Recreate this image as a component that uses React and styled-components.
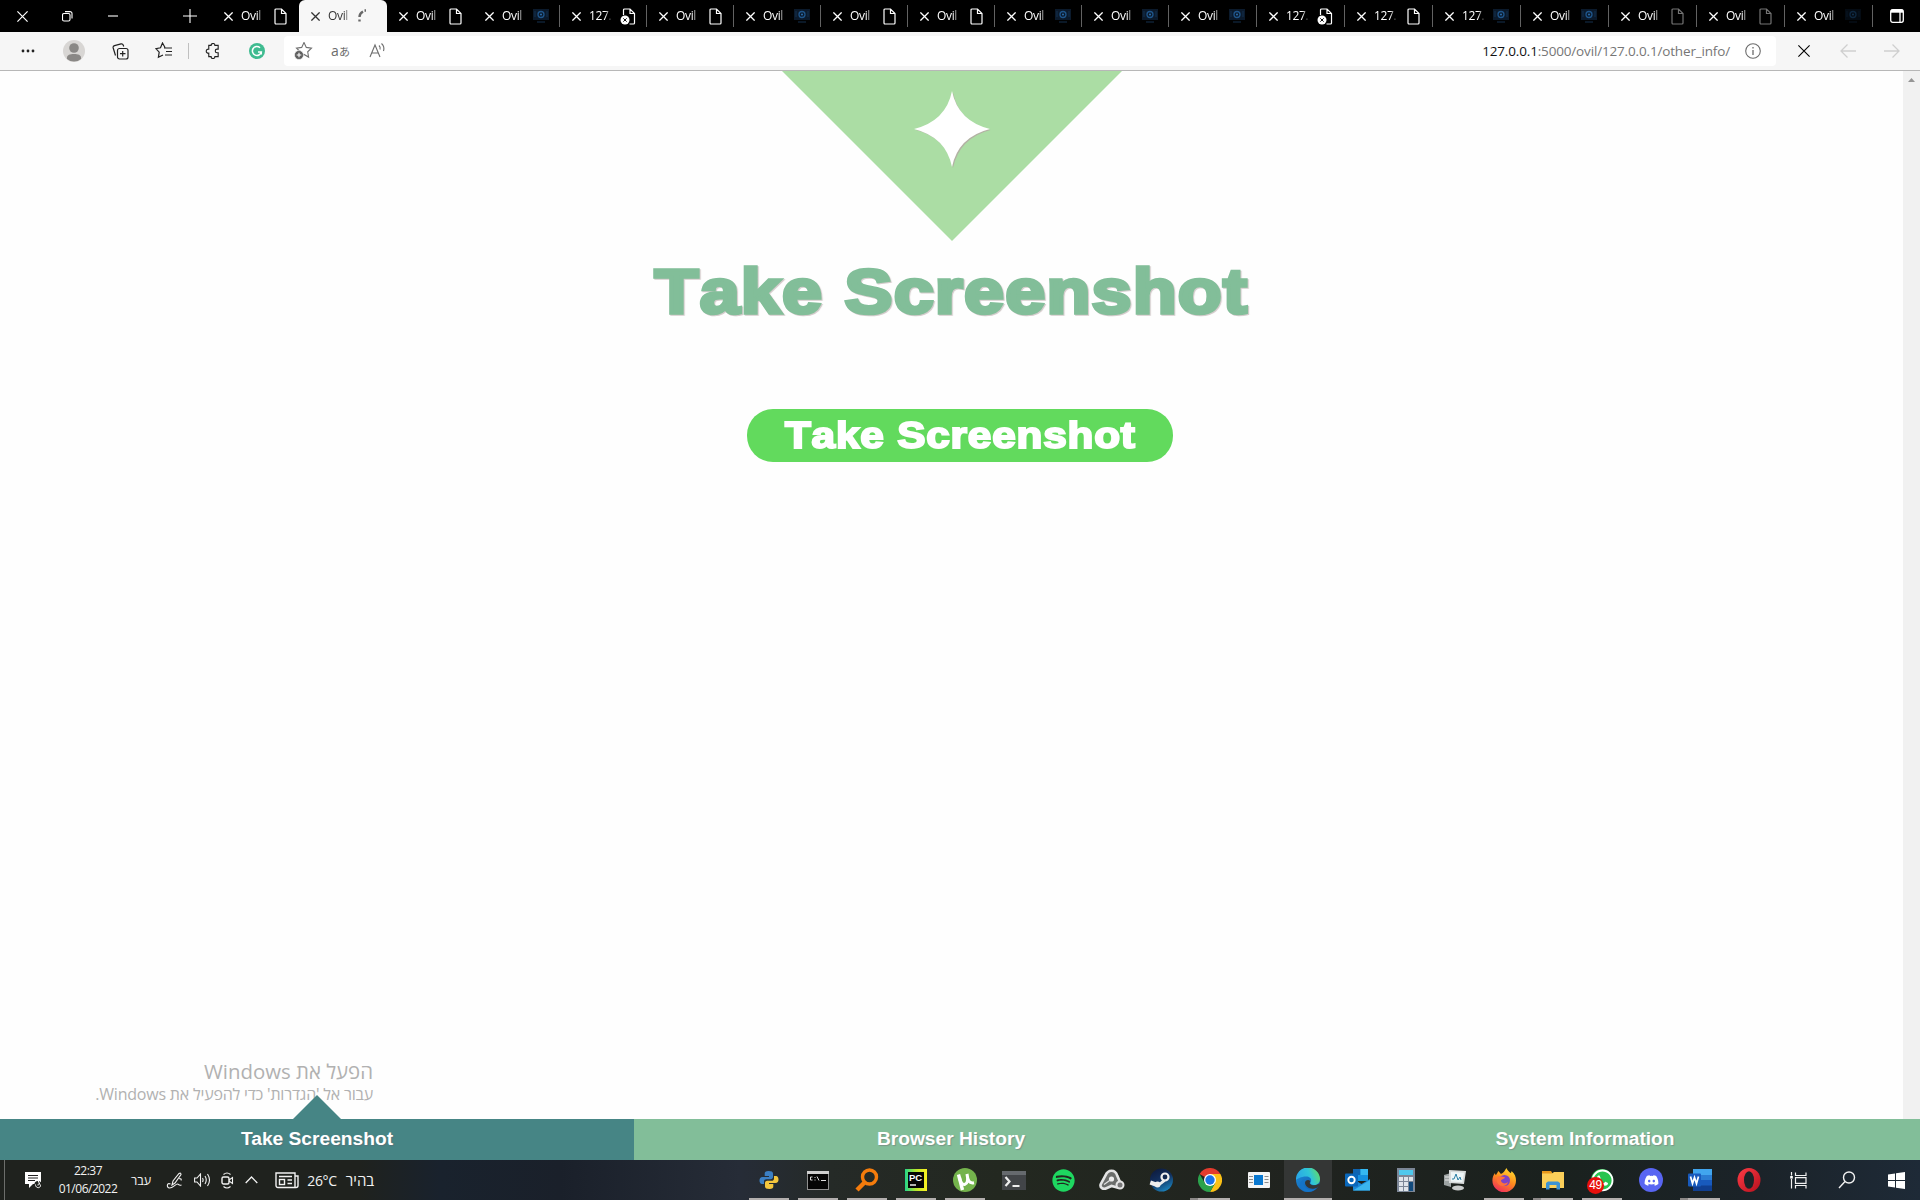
import React from "react";
import styled, { createGlobalStyle, css } from "styled-components";
import { FaSpotify, FaDiscord, FaWhatsapp } from "react-icons/fa";

const UI = `"Open Sans", "Noto Sans", "DejaVu Sans", sans-serif`;
const ARIAL = `"Liberation Sans", Arial, sans-serif`;

const Global = createGlobalStyle`
  *, *::before, *::after { box-sizing: border-box; }
  body { margin: 0; background: #fff; overflow: hidden; }
  svg { display: block; flex: none; }
`;

const Screen = styled.div`
  display: flex;
  flex-direction: column;
  width: 1920px;
  height: 1200px;
  overflow: hidden;
  font-family: ${UI};
  background: #fefefe;
`;

/* ---------- tab strip ---------- */
const TabStrip = styled.div`
  display: flex;
  height: 32px;
  background: #000;
  color: #fff;
`;
const WindowButtons = styled.div`
  display: flex;
  width: 212px;
  align-items: center;
`;
const WindowButton = styled.div`
  display: flex;
  justify-content: center;
  width: ${(p) => p.$w || 46}px;
  margin-left: ${(p) => p.$gap || 0}px;
`;
const Tab = styled.div`
  display: flex;
  align-items: center;
  width: ${(p) => p.$w}px;
  height: 32px;
  padding-left: 12px;
  border-right: 1px solid ${(p) => (p.$line ? "#626262" : "transparent")};
  border-image: ${(p) => (p.$line ? "linear-gradient(#000 6px, #626262 6px, #626262 26px, #000 26px) 1" : "none")};
  ${(p) =>
    p.$active &&
    css`
      background: #f7f7f7;
      color: #333;
      border-radius: 6px 6px 0 0;
    `}
`;
const TabTitle = styled.span`
  width: 23px;
  margin-left: 8px;
  overflow: hidden;
  white-space: nowrap;
  font-size: 12px;
  line-height: 18px;
  letter-spacing: -0.35px;
  mask-image: linear-gradient(90deg, #000 16px, transparent 23px);
`;
const TabIcon = styled.span`
  display: flex;
  justify-content: center;
  width: 18px;
  margin-left: ${(p) => (p.$near ? 2 : 7)}px;
  opacity: ${(p) => (p.$dim ? 0.45 : 1)};
`;
const StripEnd = styled.div`
  display: flex;
  flex: 1;
  align-items: center;
  justify-content: center;
`;

/* ---------- toolbar ---------- */
const Toolbar = styled.div`
  display: flex;
  align-items: center;
  height: 39px;
  background: #f6f6f6;
  border-bottom: 1px solid #b7b7b7;
`;
const ToolSlot = styled.div`
  display: flex;
  justify-content: center;
  width: ${(p) => p.$w}px;
`;
const Divider = styled.div`
  width: 1px;
  height: 16px;
  background: #c0c0c0;
`;
const AddressBar = styled.div`
  display: flex;
  align-items: center;
  width: 1492px;
  height: 30px;
  background: #fff;
  border-radius: 4px;
`;
const Translate = styled.span`
  display: flex;
  align-items: baseline;
  gap: 0;
  color: #6c6c6c;
  font-size: 14px;
  line-height: 20px;
  white-space: nowrap;
  small { font: 11px/14px "Noto Sans CJK JP", sans-serif; }
`;
const Url = styled.div`
  flex: 1;
  text-align: right;
  font-size: 13.5px;
  letter-spacing: -0.16px;
  line-height: 20px;
  color: #767676;
  b { font-weight: 400; color: #111; }
`;

/* ---------- web page ---------- */
const PageRow = styled.div`
  display: flex;
  height: 1048px;
`;
const Page = styled.main`
  display: flex;
  flex-direction: column;
  align-items: center;
  width: 1903px;
  font-family: ${ARIAL};
`;
const ScrollBar = styled.div`
  display: flex;
  justify-content: center;
  width: 17px;
  padding-top: 7px;
  background: #f1f1f1;
`;
const Heading = styled.h1`
  margin: 14px 0 0;
  font-size: 63px;
  line-height: 72px;
  font-kerning: none;
  letter-spacing: 1.1px;
  color: #82be99;
  -webkit-text-stroke: 3.6px #82be99;
  filter: drop-shadow(1px 1px 0.5px rgba(150, 130, 130, 0.4));
  transform: scaleX(1.14);
`;
const ShotButton = styled.button`
  display: flex;
  align-items: center;
  justify-content: center;
  width: 426px;
  height: 53px;
  margin: 82px 0 0 17px;
  padding: 0;
  border: 0;
  border-radius: 26px;
  background: #62da5d;
`;
const ShotLabel = styled.span`
  padding-top: 1px;
  font: bold 37px/50px ${ARIAL};
  font-kerning: none;
  letter-spacing: 0.7px;
  color: #fff;
  -webkit-text-stroke: 2px #fff;
  transform: scaleX(1.144);
`;
const Watermark = styled.div`
  position: absolute;
  left: 60px;
  top: 1058px;
  width: 313px;
  direction: rtl;
  color: #b1b1b1;
  white-space: nowrap;
`;
const MarkTitle = styled.div`
  font-size: 20.400px;
  line-height: 27px;
`;
const MarkText = styled.div`
  font-size: 16px;
  line-height: 19px;
  letter-spacing: -0.2px;
`;

const Nav = styled.nav`
  display: flex;
  position: relative;
  height: 41px;
  padding-right: 18px;
  background: #82be99;
`;
const NavItem = styled.div`
  position: relative;
  flex: 1;
  text-align: center;
  font: bold 19.2px/39px ${ARIAL};
  color: #fff;
  text-shadow: 1px 1px 1px rgba(110, 90, 110, 0.4);
  background: ${(p) => (p.$active ? "#468585" : "#82be99")};
  &::before {
    content: "";
    display: ${(p) => (p.$active ? "block" : "none")};
    position: absolute;
    left: 293px;
    bottom: 41px;
    border: 24px solid transparent;
    border-top: 0;
    border-bottom-color: #468585;
  }
`;

/* ---------- taskbar ---------- */
const Taskbar = styled.footer`
  display: flex;
  height: 40px;
  color: #f2f2f2;
  background: linear-gradient(90deg, #1f221e 0, #1f221e 360px, #19222d 440px, #1a202a 560px, #262c37 740px, #252a27 830px, #232820 1000px, #20231f 1300px, #1a211e 1560px, #1b2329 1760px, #1e2a37 1920px);
`;
const Tray = styled.div`
  display: flex;
  align-items: center;
  width: 745px;
`;
const TrayEdge = styled.div`
  width: 1px;
  height: 40px;
  margin-left: 4px;
  background: #6c6e6b;
`;
const TraySlot = styled.div`
  display: flex;
  justify-content: center;
  width: ${(p) => p.$w}px;
  margin-left: ${(p) => p.$gap || 0}px;
  font-size: ${(p) => p.$size || 12}px;
  letter-spacing: ${(p) => p.$ls || 0}px;
  white-space: nowrap;
`;
const Clock = styled.div`
  width: 60px;
  margin-left: 16px;
  text-align: center;
  font-size: 12px;
  line-height: 18px;
  letter-spacing: -0.5px;
  white-space: nowrap;
`;
const Apps = styled.div`
  display: flex;
  gap: 1px;
`;
const AppSlot = styled.div`
  display: flex;
  position: relative;
  align-items: center;
  justify-content: center;
  width: 48px;
  height: 40px;
  background: ${(p) => (p.$active ? "#343635" : "transparent")};
`;
const Running = styled.i`
  position: absolute;
  left: ${(p) => (p.$full ? 0 : 4)}px;
  right: ${(p) => (p.$full ? 0 : 4)}px;
  bottom: 0;
  height: 2px;
  background: ${(p) => (p.$stack ? "linear-gradient(90deg,#8c8988 8px,#b3afae 8px)" : "#b3afae")};
`;
const Badge = styled.span`
  position: absolute;
  left: 9px;
  top: 17px;
  width: 17px;
  height: 17px;
  border-radius: 50%;
  background: #e8100c;
  font: 12px/17px ${ARIAL};
  letter-spacing: -0.5px;
  text-align: center;
  color: #fff;
`;
const Disc = styled.span`
  display: flex;
  align-items: center;
  justify-content: center;
  width: ${(p) => p.$s || 24}px;
  height: ${(p) => p.$s || 24}px;
  border-radius: 50%;
  background: ${(p) => p.$bg};
  color: ${(p) => p.$fg};
`;

/* ---------- drawings ---------- */
const Line = ({ w = 16, h = w, box, c = "currentColor", sw = 1.1, children }) => (
  <svg width={w} height={h} viewBox={box || `0 0 ${w} ${h}`} fill="none" stroke={c} strokeWidth={sw}>{children}</svg>
);
const Cross = ({ s = 9, sw = 1.3 }) => <Line w={s} sw={sw}><path d={`M.4 .4L${s - 0.4} ${s - 0.4}M${s - 0.4} .4L.4 ${s - 0.4}`} /></Line>;
const Doc = () => <Line w={13} h={17} sw={1.2}><path d="M1.500 1h6L12 5.500v9.500a1 1 0 0 1-1 1h-9a1 1 0 0 1-1-1v-13a1 1 0 0 1 1-1zM7.500 1v4.500H12" /></Line>;
const BrokenDoc = () => (
  <Line w={16} h={17} sw={1.2}>
    <path d="M3.500 7V2a1 1 0 0 1 1-1h5.500L14.500 5.500v9.500a1 1 0 0 1-1 1h-4M10 1v4.500h4.500" />
    <circle cx="5" cy="12" r="4.500" fill="#fff" stroke="none" />
    <path d="M3.300 10.300l3.400 3.400M6.700 10.300l-3.400 3.400" stroke="#111" strokeWidth="1" />
  </Line>
);
const Blue = () => (
  <svg width="16" height="16" viewBox="0 0 16 16">
    <rect x="0" y="1" width="16" height="11" fill="#0b1a2c" />
    <circle cx="8" cy="6.500" r="3" fill="none" stroke="#1f558a" strokeWidth="1.300" />
    <circle cx="8" cy="6.500" r="1" fill="#2c6fae" />
    <path d="M2 3v6M14 3v6M4 14h8" stroke="#15304e" />
  </svg>
);
const Spinner = () => <Line w={10} h={14} c="#686868" sw={2.400}><path d="M6 2.500Q2.500 4.500 2.500 8M2.500 10.500v2M7.500 1.500h1.500" /></Line>;
const tabIcons = { doc: Doc, bad: BrokenDoc, blue: Blue, spin: Spinner };

const Puzzle = () => <Line w={16} sw={1.2} c="#222" box="0 0 17 17"><path d="M4 2.500h2.500a2 2 0 0 1 4 0H14v4h-1.200a1.900 1.900 0 0 0 0 3.800H14v4.200h-3.500a2 2 0 0 1-4 0H4v-3.700a2.200 2.200 0 1 1 0-4.300z" /></Line>;
const STAR = "M9 1.500l2.300 4.900 5.200.7-3.800 3.700.9 5.300L9 13.500l-4.600 2.600.9-5.300L1.500 7.100l5.200-.7z";

const Python = () => (
  <svg width="20" height="20" viewBox="0 0 20 20">
    <path d="M9.500 1c-3 0-3.800 1-3.800 2.500V6H10v1H3.500C1.500 7 .5 8.500.5 10.500S1.500 14 3 14h2v-2.500C5 10 6 9.200 7.500 9.200h4.300c1.400 0 2.200-1 2.200-2.200V3.500C14 1.800 12.500 1 9.500 1z" fill="#3b7fc4" />
    <path d="M10.500 19c3 0 3.800-1 3.800-2.500V14H10v-1h6.500c2 0 3-1.500 3-3.500S18.500 6 17 6h-2v2.500c0 1.500-1 2.300-2.500 2.300H8.200C6.800 10.800 6 11.800 6 13v3.500c0 1.700 1.500 2.500 4.500 2.500z" fill="#f4c63d" />
  </svg>
);
const Cmd = () => (
  <svg width="22" height="19" viewBox="0 0 22 19">
    <rect width="22" height="19" fill="#8f8f8f" /><rect width="22" height="3" fill="#cfcfcf" /><rect x="1" y="3" width="20" height="15" fill="#050505" />
    <path d="M5.500 6H3.500v3h2M8 6v1M8 8.500v1M10 5.500l2 4M14 9.500h5" stroke="#ddd" fill="none" />
  </svg>
);
const Everything = () => <Line w={24} c="#f57c0c" sw={3.400}><circle cx="14.500" cy="9" r="7" /><path d="M9.500 14.500L2 22" strokeWidth="4.500" /></Line>;
const PyCharm = () => (
  <svg width="22" height="22" viewBox="0 0 22 22">
    <defs><linearGradient id="pc" x1="0" x2="1"><stop offset="0" stopColor="#22d58b" /><stop offset=".5" stopColor="#b7e62c" /><stop offset="1" stopColor="#fcf221" /></linearGradient></defs>
    <rect width="22" height="22" fill="url(#pc)" /><rect x="3" y="3" width="16" height="16" fill="#050505" />
    <text x="4" y="12" fontFamily="Liberation Sans, sans-serif" fontWeight="bold" fontSize="9.500" textLength="13" fill="#fff">PC</text><path d="M5 16h6" stroke="#fff" strokeWidth="1.400" />
  </svg>
);
const UTorrent = () => (
  <svg width="24" height="24" viewBox="0 0 24 24"><circle cx="12" cy="12" r="12" fill="#74b34c" />
    <path d="M5.500 6.500l4 15.500" fill="none" stroke="#fff" strokeWidth="3.400" />
    <path d="M6.500 9c1 6 3 8 5.500 7.300s3.300-3.500 2-10.300c.8 6.500 2 9.800 7 8.800" fill="none" stroke="#fff" strokeWidth="3" /></svg>
);
const Terminal = () => (
  <svg width="24" height="19" viewBox="0 0 24 19"><rect width="24" height="19" fill="#424548" /><rect width="24" height="4" fill="#666a6e" />
    <path d="M3.500 6l4 4.500-4 4.500" fill="none" stroke="#eee" strokeWidth="2.200" /><path d="M10.500 15h7" stroke="#eee" strokeWidth="2" /></svg>
);
const Knot = () => (
  <svg width="26" height="22" viewBox="0 0 26 22" fill="none" stroke="#e4e4e4">
    <path d="M12.500 1.800c4 0 5 2.500 5.800 5l3 7c1.200 3.500-1 5.500-4 4.500L12.500 17l-4.500 2c-4 2-7.500-.5-6.200-4L6.500 6.500c1.200-3 2.500-4.700 6-4.700z" fill="#6b6d6b" strokeWidth="2.600" />
    <circle cx="12.500" cy="10" r="2.600" fill="#eee" stroke="none" /><circle cx="21" cy="16" r="3.500" fill="#777" strokeWidth="2" /><path d="M5 15.500L12 10.500" strokeWidth="1.200" />
  </svg>
);
const Steam = () => (
  <svg width="24" height="24" viewBox="0 0 24 24">
    <defs><linearGradient id="st" x1=".2" y1="0" x2=".7" y2="1"><stop offset="0" stopColor="#0d1a3c" /><stop offset=".5" stopColor="#12305f" /><stop offset="1" stopColor="#1c86c0" /></linearGradient></defs>
    <circle cx="12.500" cy="12" r="11.500" fill="url(#st)" />
    <path d="M1.300 14.500l5.500 2" stroke="#eee" strokeWidth="4" /><path d="M8.500 16.500l5.500-5 2.500 2-6 4.500z" fill="#eee" />
    <circle cx="8.500" cy="16.500" r="3" fill="#eee" /><circle cx="16" cy="9" r="3.500" fill="#12284f" stroke="#eee" strokeWidth="2.200" />
  </svg>
);
const Chrome = () => (
  <svg width="24" height="24" viewBox="0 0 24 24">
    <path d="M12 12L1.600 6A12 12 0 0 1 22.400 6z" fill="#e33b2e" /><path d="M12 12V6h10.400A12 12 0 0 1 12 24l5.200-9z" fill="#fbc116" />
    <path d="M12 12l5.200 3L12 24A12 12 0 0 1 1.600 6l5.200 9z" fill="#2ba24c" /><circle cx="12" cy="12" r="6" fill="#fff" /><circle cx="12" cy="12" r="4.700" fill="#1a73e8" />
  </svg>
);
const Reader = () => (
  <svg width="22" height="16" viewBox="0 0 22 16"><rect width="22" height="16" rx="1" fill="#f4f4f4" /><rect x="6" y="3" width="9" height="10" fill="#0a78d0" />
    <path d="M1 4.500h4M1 7.500h4M1 10.500h4M16.500 4.500h4M16.500 7.500h4M16.500 10.500h4" stroke="#8b8b8b" /></svg>
);
const Edge = () => (
  <svg width="24" height="24" viewBox="0 0 24 24">
    <defs>
      <linearGradient id="ea" x1="0" x2="1" y1=".3" y2="0"><stop offset="0" stopColor="#2aa9e6" /><stop offset=".5" stopColor="#2fc5d8" /><stop offset="1" stopColor="#6fdf4e" /></linearGradient>
      <linearGradient id="eb" x1="0" x2="1" y2="1"><stop offset="0" stopColor="#1b8fdc" /><stop offset="1" stopColor="#1255a8" /></linearGradient>
    </defs>
    <circle cx="12" cy="12" r="12" fill="url(#eb)" />
    <path d="M0 12A12 12 0 0 1 24 11c0 4-3 6-6 6-2.500 0-4.500-1-3.500-2.500C16 12 15 8.500 10 8.500 5 8.500 1 11 0 12z" fill="url(#ea)" />
    <path d="M13.800 12.500c1 1.500-.8 2 .2 3.300 2 2 5.500 2 8.500.2l1.500 1-3.500 3c-6 2-11-1-11.500-5 0-2.500 3-4 4.800-2.500z" fill="#343635" />
    <path d="M9 11c-3 4-.5 10 5 10.500 3 .2 5-.5 7.500-2A12 12 0 0 1 8 23.200C2 20 3 12.500 9 11z" fill="#1474c8" />
  </svg>
);
const Outlook = () => (
  <svg width="25" height="22" viewBox="0 0 25 22"><path d="M8 0h15v12H8z" fill="#1490df" /><path d="M8 0h7.500v6H8z" fill="#0f64b0" /><path d="M15.500 0H23v6h-7.500z" fill="#35b8f1" /><path d="M8 10l8.500 5L25 10v11.500H8z" fill="#1a87d6" /><path d="M8 21.500L25 11v10.500z" fill="#3bb5ee" />
    <rect y="4.500" width="13" height="13" rx="1" fill="#0a67ba" /><circle cx="6.500" cy="11" r="3.200" fill="none" stroke="#fff" strokeWidth="1.900" /></svg>
);
const Calculator = () => (
  <svg width="18" height="24" viewBox="0 0 18 24"><rect width="18" height="24" fill="#7c8696" /><rect x="2" y="2" width="14" height="5" fill="#4fc8ec" />
    {[9, 14, 19].map((y) => [2, 7, 12].map((x) => <rect key={x + y * 9} x={x} y={y} width="4" height="4" fill={x === 12 && y > 9 ? "#124a7c" : "#dfe4ea"} />))}<rect x="12" y="14" width="4" height="9" fill="#124a7c" /></svg>
);
const Monitor = () => (
  <svg width="24" height="22" viewBox="0 0 24 22"><path d="M1 6l7-2v14l-7-2z" fill="#9da3a3" /><path d="M2 8h5M2 11h5" stroke="#e8e8e8" /><path d="M6 1l17 1-2 13-15-1z" fill="#d7dada" /><path d="M8 3l13 .7-1.600 9.500L8 12.500z" fill="#eef6f7" /><path d="M9 10h2l2-5 2 6 2-3 1 3" fill="none" stroke="#2a7ea5" /><ellipse cx="15" cy="19" rx="6" ry="2.500" fill="#c9cccc" /></svg>
);
const Firefox = () => (
  <svg width="24" height="24" viewBox="0 0 24 24">
    <defs><linearGradient id="ff" x1=".8" x2=".3" y2="1"><stop offset="0" stopColor="#ffe12f" /><stop offset=".5" stopColor="#ff8a1e" /><stop offset="1" stopColor="#ef2d5d" /></linearGradient></defs>
    <path d="M3 5c0 1 .5 2 1 2 1-2 2-2.500 2-4 1 .5 2 2 3 3 2-1 3-2 5.500-6 .5 2 2 3 4 5 .7-.3 1-1 1-2C23 6 24 9 24 12.500a11.800 11.800 0 0 1-23.600 0C.4 9 1.500 7 3 5z" fill="url(#ff)" />
    <circle cx="12.500" cy="12.500" r="5.500" fill="#7d43c6" /><path d="M5 9c3-1.500 6 0 8 .5-1 2-4 1.500-4 3.500 1 3 5 3 7 1-1 5-9 5.500-11 0z" fill="#ff7139" />
  </svg>
);
const Folder = () => (
  <svg width="23" height="19" viewBox="0 0 23 19"><path d="M0 0h9l2 3H0z" fill="#e8981c" /><path d="M0 2.500h10l2-1.500h10v16H0z" fill="#fbcf59" /><path d="M4 18.500V12l2-1.500h10l2 1.500v6.500h-3.500V14h-7v4.500z" fill="#3c93d4" /></svg>
);
const Word = () => (
  <svg width="24" height="22" viewBox="0 0 24 22"><rect x="5" width="19" height="22" rx="1" fill="#2b7cd3" /><path d="M5 0h19v6H5z" fill="#41a5ee" /><path d="M5 11h19v6H5z" fill="#185abd" /><path d="M5 16.500h19V22H5z" fill="#103f91" /><rect y="4.500" width="13" height="13" rx="1" fill="#185abd" />
    <path d="M2.500 7.500l2 7 2-6 2 6 2-7" fill="none" stroke="#fff" strokeWidth="1.700" /></svg>
);
const Opera = () => (
  <svg width="24" height="24" viewBox="0 0 24 24"><defs><linearGradient id="op" x2="1" y2="1"><stop offset="0" stopColor="#ff3c46" /><stop offset="1" stopColor="#b5101d" /></linearGradient></defs><ellipse cx="12" cy="12" rx="11.500" ry="12" fill="url(#op)" /><ellipse cx="12" cy="12" rx="5" ry="8.800" fill="#1b2328" /></svg>
);
const TaskView = () => <Line w={17} h={17} sw={1.200}><path d="M5.500 .5v3h10.500v-3M5.500 16.500v-3h10.500v3M5.500 5.700h10.500v5.600H5.500zM1.500 0v3.500M1.500 7v9.500" /><rect x=".2" y="4" width="2.600" height="2.600" fill="#fff" stroke="none" /></Line>;
const Search = () => <Line w={18} sw={1.400}><circle cx="11" cy="6.500" r="5.500" /><path d="M7 10.500L1 17" /></Line>;
const Windows = () => <svg width="17" height="17" viewBox="0 0 17 17" fill="#fff"><path d="M0 2.400L7 1.400V8H0zM8 1.200L17 0v8H8zM0 9h7v6.600l-7-1zM8 9h9v8l-9-1.200z" /></svg>;

const tabs = [
  ["Ovil", "doc", 87], ["Ovil", "spin", 88], ["Ovil", "doc", 86], ["Ovil", "blue", 87, 1], ["127.", "bad", 87, 1],
  ["Ovil", "doc", 87, 1], ["Ovil", "blue", 87, 1], ["Ovil", "doc", 87, 1], ["Ovil", "doc", 87, 1], ["Ovil", "blue", 87, 1],
  ["Ovil", "blue", 87, 1], ["Ovil", "blue", 88, 1], ["127.", "bad", 88, 1], ["127.", "doc", 88, 1], ["127.", "blue", 88, 1],
  ["Ovil", "blue", 88, 1], ["Ovil", "doc", 88, 1, 1], ["Ovil", "doc", 88, 1, 1], ["Ovil", "blue", 88, 1, 1],
];

const apps = [
  { icon: <Python />, run: 1 }, { icon: <Cmd />, run: 1 }, { icon: <Everything />, run: 1 }, { icon: <PyCharm />, run: 1 }, { icon: <UTorrent />, run: 1 },
  { icon: <Terminal /> }, { icon: <FaSpotify size={23} color="#1ed760" /> }, { icon: <Knot /> }, { icon: <Steam /> },
  { icon: <Chrome />, run: 1, stack: 1 }, { icon: <Reader /> }, { icon: <Edge />, run: 1, active: 1 }, { icon: <Outlook /> }, { icon: <Calculator /> },
  { icon: <Monitor /> }, { icon: <Firefox />, run: 1 }, { icon: <Folder />, run: 1, stack: 1 },
  { icon: <Disc $s={22} $bg="#27c44f" $fg="#fff"><FaWhatsapp size={25} /></Disc>, run: 1, badge: "49" },
  { icon: <Disc $bg="#5865f2" $fg="#fff"><FaDiscord size={15} /></Disc> },
  { icon: <Word />, run: 1, stack: 1 }, { icon: <Opera /> }, { icon: <TaskView /> }, { icon: <Search /> }, { icon: <Windows /> },
];

export default function App() {
  return (
    <Screen>
      <Global />
      <TabStrip>
        <WindowButtons>
          <WindowButton><Cross s={11} sw={1.2} /></WindowButton>
          <WindowButton $gap={1}><Line w={11}><rect x=".5" y="2.500" width="7.500" height="7.500" rx="1.500" /><path d="M3 .6h5a2 2 0 0 1 2 2v5" /></Line></WindowButton>
          <WindowButton $gap={1}><Line w={10} h={2}><path d="M0 1h10" /></Line></WindowButton>
          <WindowButton $gap={33}><Line w={14}><path d="M7 0v14M0 7h14" /></Line></WindowButton>
        </WindowButtons>
        {tabs.map(([title, icon, w, line, dim], i) => {
          const Icon = tabIcons[icon];
          return (
            <Tab key={i} $w={w} $line={line} $active={icon === "spin"}>
              <Cross /><TabTitle>{title}</TabTitle><TabIcon $dim={dim} $near={icon === "spin"}><Icon /></TabIcon>
            </Tab>
          );
        })}
        <StripEnd><Line w={14} sw={1.300}><rect x=".7" y=".7" width="12.600" height="12.600" rx="2" /><path d="M1 2.200h12" strokeWidth="3" /><path d="M10 3v10" /></Line></StripEnd>
      </TabStrip>

      <Toolbar>
        <ToolSlot $w={56}><svg width="14" height="4" fill="#222"><circle cx="2" cy="2" r="1.400" /><circle cx="7" cy="2" r="1.400" /><circle cx="12" cy="2" r="1.400" /></svg></ToolSlot>
        <ToolSlot $w={36}><svg width="22" height="22" viewBox="0 0 22 22"><circle cx="11" cy="11" r="11" fill="#d8d6d4" /><circle cx="11" cy="8" r="4.800" fill="#8a8886" /><path d="M4 19c-.5-4 2.500-5 7-5s7.500 1 7 5a11 11 0 0 1-14 0z" fill="#8a8886" /></svg></ToolSlot>
        <ToolSlot $w={56}><Line w={17} c="#222" sw={1.200}><rect x="5.500" y="5.500" width="10.500" height="10.500" rx="2" /><path d="M10.700 8v5.500M8 10.700h5.500M3.500 12.500L1.200 5A2 2 0 0 1 2.500 2.600L9 .9a2 2 0 0 1 2.300 1.300l.4 1.300" /></Line></ToolSlot>
        <ToolSlot $w={32}><Line w={18} c="#222" sw={1.200}><path d="M10 5.500L7.500 1 5.500 5.800.9 6.600l3.300 3.600-.8 5L8 13M9 6h8M11 9.500h6M10 13h7" /></Line></ToolSlot>
        <ToolSlot $w={16}><Divider /></ToolSlot>
        <ToolSlot $w={34}><Puzzle /></ToolSlot>
        <ToolSlot $w={54}><svg width="16" height="16" viewBox="0 0 16 16"><circle cx="8" cy="8" r="8" fill="#3fbb90" /><path d="M11 4.700A4.500 4.500 0 1 0 12.300 9H9M12.300 9v2.500" fill="none" stroke="#fff" strokeWidth="1.500" /></svg></ToolSlot>
        <AddressBar>
          <ToolSlot $w={39}><Line w={19} h={18} c="#707070" sw={1.100}><path d={STAR} transform="translate(1 -1)" /><circle cx="5" cy="13" r="4.500" fill="#5e5e5e" stroke="#fff" strokeWidth=".6" /><path d="M5 10.700v4.600M2.700 13h4.600" stroke="#fff" /></Line></ToolSlot>
          <ToolSlot $w={35}><Translate>a<small>あ</small></Translate></ToolSlot>
          <ToolSlot $w={38}><Line w={17} h={16} c="#6c6c6c"><path d="M1 14L6 2l5 12M2.800 10h6.400M10 2.500q1.800 1.700 1 4M12.500 .5q3.400 3 2 7.500" /></Line></ToolSlot>
          <Url><b>127.0.0.1</b>:5000/ovil/127.0.0.1/other_info/</Url>
          <ToolSlot $w={46}><Line w={16} c="#6c6c6c"><circle cx="8" cy="8" r="7.300" /><path d="M8 7v5M8 4v1.500" strokeWidth="1.300" /></Line></ToolSlot>
        </AddressBar>
        <ToolSlot $w={56}><Cross s={12} sw={1.1} /></ToolSlot>
        <ToolSlot $w={32}><Line w={16} h={14} c="#cfcfcf" sw={1.300}><path d="M16 7H1M7.500 .5L1 7l6.500 6.500" /></Line></ToolSlot>
        <ToolSlot $w={56}><Line w={16} h={14} c="#cfcfcf" sw={1.300}><path d="M0 7h15M8.500 .5L15 7l-6.500 6.500" /></Line></ToolSlot>
      </Toolbar>

      <PageRow>
        <Page>
          <svg width="340" height="170" viewBox="0 0 340 170">
            <path d="M0 0h340L170 170z" fill="#abdda4" />
            <path d="M171 21.500q6 30 37.500 37.500-31 8-37.500 38-6-30-37-38 31-8 37-37.500z" fill="#b3b2a4" />
            <path d="M170 20q6 30 38 38-32 8-38 38-6-30-38-38 32-8 38-38z" fill="#fff" />
          </svg>
          <Heading>Take Screenshot</Heading>
          <ShotButton><ShotLabel>Take Screenshot</ShotLabel></ShotButton>
        </Page>
        <ScrollBar><svg width="7" height="4"><path d="M0 4L3.500 0 7 4z" fill="#959595" /></svg></ScrollBar>
      </PageRow>

      <Watermark>
        <MarkTitle>הפעל את Windows</MarkTitle>
        <MarkText>עבור אל 'הגדרות' כדי להפעיל את Windows.</MarkText>
      </Watermark>

      <Nav>
        <NavItem $active>Take Screenshot</NavItem>
        <NavItem>Browser History</NavItem>
        <NavItem>System Information</NavItem>
      </Nav>

      <Taskbar>
        <Tray>
          <TrayEdge />
          <TraySlot $w={18} $gap={19}><svg width="17" height="17" viewBox="0 0 17 17"><path d="M0 0h16v12H8l-4 4v-4H0z" fill="#fff" /><path d="M3 3.500h10M3 6h10M3 8.500h7" stroke="#222" /><circle cx="13" cy="12.500" r="3.600" fill="#20231f" /><path d="M10.500 12.500c0 4 5 4 5 1 0-2-3-2-2.500 0M13 8l1.500 4" fill="none" stroke="#fff" /></svg></TraySlot>
          <Clock>22:37<br />01/06/2022</Clock>
          <TraySlot $w={24} $gap={11} $size={12.5}>עבר</TraySlot>
          <TraySlot $w={20} $gap={11}><Line w={17} h={17}><path d="M4.500 12c-4-2-4 4-1 4 3.500 0 6-4 8-4 1.500 0 1 2 4 1M6 13l1-4L13 1.500q2-1 2 1L9 11zM13 6.500q3 0 2 2" /></Line></TraySlot>
          <TraySlot $w={18} $gap={9}><Line w={17} h={14}><path d="M.6 5H3l3.500-4v12L3 9H.6zM8.500 5q1.200 2 0 4M11 3q2.500 4 0 8M13.500 1q4 6 0 12" /></Line></TraySlot>
          <TraySlot $w={14} $gap={9}><Line w={13} h={17}><path d="M2.500 2.500Q6 -.5 9.500 2.500M2.500 14.500q3.500 3 7 0" /><rect x="1" y="5" width="7" height="7" rx="1.500" strokeWidth="1.400" /><path d="M8 8l3.500-2.500v6L8 9" /></Line></TraySlot>
          <TraySlot $w={14} $gap={10}><Line w={13} h={8} sw={1.300}><path d="M.7 7L6.500 1l5.800 6" /></Line></TraySlot>
          <TraySlot $w={24} $gap={17}><Line w={24} h={17} sw={1.400}><path d="M1 1h19v14.500H3a2 2 0 0 1-2-2zM20 4h3v9.500q0 2-2 2h-2M4 4.500h13M12.500 8H17M12.500 11.500H17" /><rect x="4.500" y="7.500" width="5" height="5" /></Line></TraySlot>
          <TraySlot $w={30} $gap={8} $size={14} $ls={-0.3}>26°C</TraySlot>
          <TraySlot $w={30} $gap={8} $size={15}>בהיר</TraySlot>
        </Tray>
        <Apps>
          {apps.map((a, i) => (
            <AppSlot key={i} $active={a.active}>
              {a.icon}
              {a.badge && <Badge>{a.badge}</Badge>}
              {a.run && <Running $full={a.active} $stack={a.stack} />}
            </AppSlot>
          ))}
        </Apps>
      </Taskbar>
    </Screen>
  );
}
